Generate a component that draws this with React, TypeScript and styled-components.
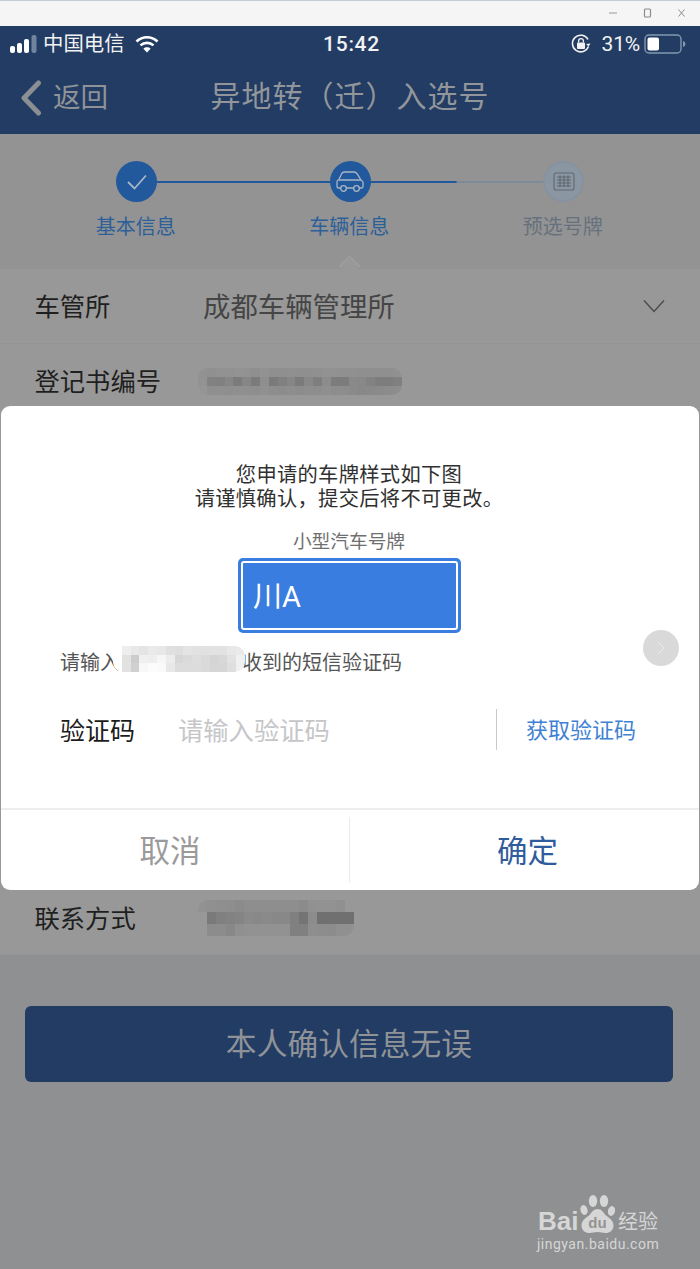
import React from 'react';
import styled, { createGlobalStyle } from 'styled-components';

const GlobalStyle = createGlobalStyle`
  html, body {
    margin: 0;
    padding: 0;
    background: #8f9092;
  }
  * {
    box-sizing: border-box;
  }
`;

const CJK = `Roboto, "Noto Sans CJK SC", sans-serif`;

const Page = styled.div`
  position: relative;
  width: 700px;
  height: 1269px;
  overflow: hidden;
  display: flex;
  flex-direction: column;
  font-family: ${CJK};
  background: #8f9092;
`;

const WindowBar = styled.div`
  height: 26px;
  flex: none;
  display: flex;
  align-items: center;
  justify-content: flex-end;
  gap: 22px;
  padding: 0 12px 1px 0;
  background: #f5f5f5;
  border-top: 1px solid #c5ccd4;
`;

const Header = styled.header`
  height: 108px;
  flex: none;
  background: #223c63;
  display: flex;
  flex-direction: column;
`;

const StatusBar = styled.div`
  height: 36px;
  padding: 0 14px 0 10px;
  display: grid;
  grid-template-columns: 1fr auto 1fr;
  align-items: center;
  color: #f2f2f2;
`;

const StatusSide = styled.div<{ $end?: boolean }>`
  display: flex;
  align-items: center;
  justify-content: ${p => (p.$end ? 'flex-end' : 'flex-start')};
`;

const Carrier = styled.span`
  font-size: 20.4px;
  line-height: 36px;
  margin: 0 10px 0 6px;
`;

const Clock = styled.span`
  font-size: 21px;
  font-weight: 500;
  letter-spacing: 0.7px;
  margin-left: 7px;
`;

const Percent = styled.span`
  font-size: 21px;
  margin: 0 4px 0 10px;
  letter-spacing: -0.2px;
`;

const NavBar = styled.div`
  position: relative;
  flex: 1;
  display: flex;
  align-items: center;
  justify-content: center;
  padding-bottom: 8px;
`;

const BackLink = styled.div`
  position: absolute;
  left: 20px;
  top: 18px;
  display: flex;
  align-items: center;
  gap: 11px;
  font-size: 27.6px;
  line-height: 36px;
  color: #8f9398;
`;

const NavTitle = styled.h1`
  margin: 0;
  font-size: 30px;
  font-weight: 400;
  letter-spacing: 1px;
  color: #92969b;
`;

const Steps = styled.section`
  height: 135px;
  flex: none;
  position: relative;
  background: #939393;
  padding-top: 27px;
`;

const Track = styled.div`
  display: flex;
  align-items: center;
  padding: 0 116px;
`;

const StepCircle = styled.div<{ $active?: boolean }>`
  width: 41px;
  height: 41px;
  flex: none;
  border-radius: 50%;
  display: flex;
  align-items: center;
  justify-content: center;
  background: ${p => (p.$active ? '#22589c' : '#8b96a3')};
  border: ${p => (p.$active ? 'none' : '2px solid #86929f')};
`;

const Connector = styled.div<{ $split?: boolean }>`
  flex: 1;
  height: 2px;
  background: ${p =>
    p.$split ? 'linear-gradient(90deg, #22589c 49.5%, #7d8a98 50%)' : '#22589c'};
`;

const StepLabels = styled.div`
  display: grid;
  grid-template-columns: repeat(3, 213.5px);
  padding: 10px 0 0 29px;
`;

const StepLabel = styled.span<{ $muted?: boolean }>`
  text-align: center;
  font-size: 20px;
  line-height: 30px;
  color: ${p => (p.$muted ? '#66717d' : '#2d5f99')};
`;

const Pointer = styled.div`
  position: absolute;
  left: 341px;
  bottom: -6px;
  width: 17px;
  height: 17px;
  background: #989898;
  border-top: 1px solid #a3a3a3;
  border-left: 1px solid #a3a3a3;
  transform: rotate(45deg) scale(0.9);
`;

const Form = styled.section`
  height: 686px;
  flex: none;
  background: #989898;
  display: flex;
  flex-direction: column;
`;

const FormRow = styled.div<{ $height: number; $line?: boolean }>`
  height: ${p => p.$height}px;
  flex: none;
  display: flex;
  align-items: center;
  padding: 0 35px 0 34.500px;
  border-bottom: ${p => (p.$line ? '1px solid #949494' : 'none')};
`;

const FormGap = styled.div`
  flex: 1;
`;

const FieldLabel = styled.span<{ $width: number }>`
  width: ${p => p.$width}px;
  flex: none;
  margin-bottom: 3px;
  font-size: 25.3px;
  color: #1f1f1f;
`;

const FieldValue = styled.span`
  flex: 1;
  margin-bottom: 2px;
  font-size: 27.4px;
  color: #454545;
`;

const SubmitArea = styled.div`
  flex: 1;
  padding: 51px 27px 0 25px;
`;

const SubmitButton = styled.button`
  width: 100%;
  height: 76px;
  padding: 0 0 5px;
  border: none;
  border-radius: 6px;
  background: #223c63;
  color: #8f9398;
  font-family: ${CJK};
  font-size: 30.700px;
  letter-spacing: 0.1px;
`;

const Modal = styled.div`
  position: absolute;
  left: 1px;
  top: 406px;
  width: 698px;
  height: 484px;
  background: #fff;
  border-radius: 9px;
  display: flex;
  flex-direction: column;
`;

const ModalBody = styled.div`
  height: 404px;
  flex: none;
  padding-top: 57px;
  border-bottom: 2px solid #eeeeee;
  display: flex;
  flex-direction: column;
`;

const Notice = styled.p`
  margin: 0 0 0 -2px;
  text-align: center;
  font-size: 20.300px;
  line-height: 24px;
  letter-spacing: 0.3px;
  color: #303030;
`;

const PlateCaption = styled.div`
  margin: 18px 0 0 -2px;
  text-align: center;
  font-size: 18.700px;
  line-height: 26px;
  color: #6f6f6f;
`;

const Plate = styled.div`
  width: 223px;
  height: 75px;
  margin: 3px 0 0 237px;
  padding: 3px;
  background: #3a7de0;
  border-radius: 5px;
`;

const PlateInner = styled.div`
  height: 100%;
  display: flex;
  align-items: center;
  padding: 0 0 3px 10px;
  border: 2px solid #fff;
  border-radius: 3px;
  color: #fff;
  font-size: 29px;
`;

const SmsHint = styled.div`
  height: 28px;
  margin-top: 14px;
  padding-left: 59px;
  display: flex;
  align-items: center;
  font-size: 20px;
  color: #555;
`;

const CodeRow = styled.div`
  height: 41px;
  margin-top: 34px;
  padding-left: 59px;
  display: flex;
  align-items: center;
`;

const CodeLabel = styled.span`
  width: 118px;
  flex: none;
  margin-bottom: 2px;
  font-size: 25px;
  color: #1c1c1c;
`;

const CodePlaceholder = styled.span`
  width: 318px;
  flex: none;
  margin-bottom: 2px;
  font-size: 25.300px;
  color: #c6c6c9;
`;

const GetCode = styled.span`
  height: 100%;
  padding: 0 0 3px 29px;
  display: flex;
  align-items: center;
  border-left: 1px solid #c9c9c9;
  font-size: 22px;
  color: #3f82d4;
`;

const ModalActions = styled.div`
  flex: 1;
  display: flex;
  align-items: center;
`;

const ActionButton = styled.button<{ $primary?: boolean; $left?: boolean }>`
  width: 349px;
  height: 66px;
  flex: none;
  padding: ${p => (p.$primary ? '0 0 2px 6px' : '0 10px 2px 0')};
  border: none;
  border-right: ${p => (p.$left ? '1px solid #ececec' : 'none')};
  background: transparent;
  font-family: ${CJK};
  font-size: 30.500px;
  color: ${p => (p.$primary ? '#2f5c9c' : '#9a9a9a')};
`;

const FloatButton = styled.div`
  position: absolute;
  left: 643px;
  top: 630px;
  width: 36px;
  height: 36px;
  border-radius: 50%;
  background: #d9d9d9;
  display: flex;
  align-items: center;
  justify-content: center;
`;

const MosaicGrid = styled.div<{ $cols: number; $cell: number; $row: number }>`
  flex: none;
  position: relative;
  display: grid;
  grid-template-columns: repeat(${p => p.$cols}, ${p => p.$cell}px);
  grid-auto-rows: ${p => p.$row}px;
  border-radius: 10px;
  overflow: hidden;
`;

const LabelRun = styled.span`
  flex: none;
`;

const HintMosaic = styled.div`
  margin: 0 -3px 4px -7px;
  z-index: 1;
  display: flex;
`;

const Watermark = styled.div`
  position: absolute;
  left: 537px;
  top: 1192px;
  width: 130px;
  color: #d6d6d6;
`;

const BaiText = styled.span`
  position: absolute;
  left: 1px;
  top: 11px;
  font-family: "Liberation Sans", sans-serif;
  font-size: 26px;
  line-height: 36px;
  font-weight: 700;
`;

const PawWrap = styled.div`
  position: absolute;
  left: 43px;
  top: 3px;
`;

const DuText = styled.span`
  position: absolute;
  left: 43px;
  top: 24px;
  width: 35px;
  text-align: center;
  font-family: "Liberation Sans", sans-serif;
  font-size: 15px;
  line-height: 14px;
  font-weight: 700;
  color: #929394;
`;

const JingyanText = styled.span`
  position: absolute;
  left: 81px;
  top: 15px;
  font-size: 20px;
  line-height: 30px;
  white-space: nowrap;
`;

const DomainText = styled.span`
  position: absolute;
  left: 0;
  top: 44px;
  font-size: 14px;
  line-height: 17px;
  letter-spacing: 0.5px;
  white-space: nowrap;
`;

const Mosaic: React.FC<{ cols: number; cell: number; row: number; tones: string[] }> = ({ cols, cell, row, tones }) => (
  <MosaicGrid $cols={cols} $cell={cell} $row={row}>
    {tones.map((tone, i) => (
      <div key={i} style={{ background: tone }} />
    ))}
  </MosaicGrid>
);

const grayScale = (values: number[]) => values.map(v => `rgb(${v},${v},${v})`);

const registerTones = grayScale([
  146, 144, 146, 145, 147, 146, 143, 146, 143, 143, 144, 143, 143, 144, 146, 146, 144, 144, 143, 143, 143, 143, 144,
  146, 130, 128, 134, 123, 134, 123, 142, 122, 128, 134, 123, 136, 126, 140, 124, 124, 137, 136, 130, 125, 125, 128,
  149, 143, 143, 142, 143, 143, 142, 144, 141, 140, 142, 140, 142, 141, 143, 141, 141, 138, 136, 137, 138, 140, 141,
]);

const phoneTones = grayScale([
  255, 238, 232, 228, 234, 232, 224, 222, 228, 226, 225, 226, 226, 232, 234,
  255, 226, 204, 240, 238, 246, 236, 214, 218, 222, 218, 212, 216, 226, 240,
  255, 226, 208, 248, 252, 250, 232, 220, 220, 220, 218, 214, 214, 222, 240,
]);

const contactTones = grayScale([
  146, 144, 143, 142, 139, 142, 142, 142, 142, 142, 142, 139, 145, 146, 146, 144, 152,
  152, 122, 128, 130, 132, 138, 136, 138, 136, 136, 128, 116, 140, 112, 112, 112, 112,
  152, 140, 140, 136, 144, 146, 146, 146, 146, 146, 128, 128, 142, 141, 140, 144, 144,
]);

const WindowControls = () => (
  <>
    <svg width="12" height="12" viewBox="0 0 12 12">
      <path d="M1 6h8" stroke="#a8a8a8" strokeWidth="1.2" />
    </svg>
    <svg width="12" height="12" viewBox="0 0 12 12">
      <rect x="2.5" y="2" width="6" height="8" rx="1" fill="none" stroke="#8c8c8c" strokeWidth="1.2" />
    </svg>
    <svg width="12" height="12" viewBox="0 0 12 12">
      <path d="M2.5 2.5l6 7M8.5 2.5l-6 7" stroke="#8c8c8c" strokeWidth="1" />
    </svg>
  </>
);

const SignalIcon = () => (
  <svg width="27" height="18" viewBox="0 0 27 18">
    <rect x="0" y="11" width="5" height="7" rx="2" fill="#fff" />
    <rect x="7" y="8" width="5" height="10" rx="2" fill="#fff" />
    <rect x="14" y="4" width="5" height="14" rx="2" fill="#fff" />
    <rect x="21.5" y="0" width="5" height="18" rx="2" fill="#71849f" />
  </svg>
);

const WifiIcon = () => (
  <svg width="24" height="18" viewBox="0 0 24 18" fill="none" stroke="#fff" strokeWidth="2.6">
    <path d="M1.5 6.5C7.5 .8 16.5 .8 22.5 6.5" />
    <path d="M5.5 10.4C9.2 7 14.8 7 18.5 10.4" />
    <path d="M12 17.5l-3.6-3.8c2-1.8 5.2-1.8 7.2 0z" fill="#fff" stroke="none" />
  </svg>
);

const RotationLockIcon = () => (
  <svg width="22" height="22" viewBox="0 0 22 22" fill="none" stroke="#f2f2f2" strokeWidth="1.5">
    <path d="M18.5 13.5A8.3 8.3 0 1 1 18 6.5" />
    <path d="M20.5 10.5l-2 3-2.4-2.6z" fill="#f2f2f2" stroke="none" />
    <rect x="7" y="9.5" width="8" height="6.5" rx="1" fill="#f2f2f2" stroke="none" />
    <path d="M8.6 9.5V8a2.4 2.4 0 0 1 4.8 0v1.5" strokeWidth="1.3" />
  </svg>
);

const BatteryIcon = () => (
  <svg width="42" height="20" viewBox="0 0 42 20">
    <rect x="1" y="1" width="36" height="18" rx="4" fill="none" stroke="#8496b0" strokeWidth="1.4" />
    <rect x="3.5" y="3.5" width="11.5" height="13" rx="2" fill="#fff" />
    <path d="M39 7c1.6.4 2.4 1.6 2.4 3S40.600 12.600 39 13z" fill="#8496b0" />
  </svg>
);

const BackChevron = () => (
  <svg width="22" height="36" viewBox="0 0 22 36" fill="none" stroke="#8b8e92" strokeWidth="5" strokeLinecap="round" strokeLinejoin="round">
    <path d="M18.500 3L4 18l14.500 15" />
  </svg>
);

const CheckIcon = () => (
  <svg width="22" height="18" viewBox="0 0 22 18" fill="none" stroke="#a9b6c6" strokeWidth="1.8">
    <path d="M2 9l6.500 6.500L20 2.500" />
  </svg>
);

const CarIcon = () => (
  <svg width="28" height="22" viewBox="0 0 28 22" fill="none" stroke="#a9b6c6" strokeWidth="1.300">
    <path d="M5 17H2.500a1.500 1.500 0 0 1-1.500-1.500V11c0-1.200.8-1.800 1.800-2.300L5.500 3c.6-1.300 1.500-2 3-2H18c1.500 0 2.400.6 3.200 1.800L25 9c1.300.7 2 1.300 2 2.600v3.900A1.500 1.500 0 0 1 25.500 17H23" />
    <path d="M3 9h22M10 17h8" />
    <circle cx="7.500" cy="17.500" r="2.800" />
    <circle cx="20.500" cy="17.500" r="2.800" />
  </svg>
);

const PlateIcon = () => (
  <svg width="22" height="19" viewBox="0 0 22 19" fill="none" stroke="#5f6871" strokeWidth="1.100">
    <rect x="1" y="1" width="20" height="17" rx="2" />
    <path d="M4 5h14M4 8h14M4 11h14M4 14h14M7 3.500v11.500M11 3.500v11.500M15 3.500v11.500" />
  </svg>
);

const DownChevron = () => (
  <svg width="22" height="14" viewBox="0 0 22 14" fill="none" stroke="#4d4d4d" strokeWidth="1.500">
    <path d="M1 1.500l10 11 10-11" />
  </svg>
);

const RightChevron = () => (
  <svg width="8" height="14" viewBox="0 0 8 14" fill="none" stroke="#eeeeee" strokeWidth="1">
    <path d="M1 1l6 6-6 6" />
  </svg>
);

const PawIcon = () => (
  <svg width="35" height="38" viewBox="0 0 35 38" fill="#d6d6d6">
    <ellipse cx="4" cy="15" rx="3.500" ry="5" transform="rotate(-15 4 15)" />
    <ellipse cx="13" cy="6" rx="4.200" ry="6" />
    <ellipse cx="24" cy="6" rx="4.200" ry="6" />
    <ellipse cx="31.500" cy="16" rx="3.500" ry="5" transform="rotate(15 31.500 16)" />
    <path d="M17.500 14c4 0 5.500 3 8 6 3 2.500 8 5 8 10.500 0 5-4 7.500-8 7.500-3 0-5-1-8-1s-5 1-8 1c-4 0-8-2.500-8-7.500C1.500 25 6.500 22.500 9.500 20c2.500-3 4-6 8-6z" />
  </svg>
);

const App: React.FC = () => {
  return (
    <Page>
      <GlobalStyle />
      <WindowBar>
        <WindowControls />
      </WindowBar>

      <Header>
        <StatusBar>
          <StatusSide>
            <SignalIcon />
            <Carrier>中国电信</Carrier>
            <WifiIcon />
          </StatusSide>
          <Clock>15:42</Clock>
          <StatusSide $end>
            <RotationLockIcon />
            <Percent>31%</Percent>
            <BatteryIcon />
          </StatusSide>
        </StatusBar>
        <NavBar>
          <BackLink>
            <BackChevron />
            <span>返回</span>
          </BackLink>
          <NavTitle>异地转（迁）入选号</NavTitle>
        </NavBar>
      </Header>

      <Steps>
        <Track>
          <StepCircle $active>
            <CheckIcon />
          </StepCircle>
          <Connector />
          <StepCircle $active>
            <CarIcon />
          </StepCircle>
          <Connector $split />
          <StepCircle>
            <PlateIcon />
          </StepCircle>
        </Track>
        <StepLabels>
          <StepLabel>基本信息</StepLabel>
          <StepLabel>车辆信息</StepLabel>
          <StepLabel $muted>预选号牌</StepLabel>
        </StepLabels>
        <Pointer />
      </Steps>

      <Form>
        <FormRow $height={75} $line>
          <FieldLabel $width={168.5}>车管所</FieldLabel>
          <FieldValue>成都车辆管理所</FieldValue>
          <DownChevron />
        </FormRow>
        <FormRow $height={74}>
          <FieldLabel $width={163.5}>登记书编号</FieldLabel>
          <Mosaic cols={23} cell={8.87} row={9} tones={registerTones} />
        </FormRow>
        <FormGap />
        <FormRow $height={73} $line>
          <FieldLabel $width={163.5}>联系方式</FieldLabel>
          <Mosaic cols={17} cell={9.2} row={12} tones={contactTones} />
        </FormRow>
      </Form>

      <SubmitArea>
        <SubmitButton>本人确认信息无误</SubmitButton>
      </SubmitArea>

      <Modal>
        <ModalBody>
          <Notice>
            您申请的车牌样式如下图
            <br />
            请谨慎确认，提交后将不可更改。
          </Notice>
          <PlateCaption>小型汽车号牌</PlateCaption>
          <Plate>
            <PlateInner>川A</PlateInner>
          </Plate>
          <SmsHint>
            <LabelRun>请输入</LabelRun>
            <HintMosaic>
              <Mosaic cols={15} cell={8.8} row={8.4} tones={phoneTones} />
            </HintMosaic>
            <LabelRun>收到的短信验证码</LabelRun>
          </SmsHint>
          <CodeRow>
            <CodeLabel>验证码</CodeLabel>
            <CodePlaceholder>请输入验证码</CodePlaceholder>
            <GetCode>获取验证码</GetCode>
          </CodeRow>
        </ModalBody>
        <ModalActions>
          <ActionButton $left>取消</ActionButton>
          <ActionButton $primary>确定</ActionButton>
        </ModalActions>
      </Modal>

      <FloatButton>
        <RightChevron />
      </FloatButton>

      <Watermark>
        <BaiText>Bai</BaiText>
        <PawWrap>
          <PawIcon />
        </PawWrap>
        <DuText>du</DuText>
        <JingyanText>经验</JingyanText>
        <DomainText>jingyan.baidu.com</DomainText>
      </Watermark>
    </Page>
  );
};

export default App;
